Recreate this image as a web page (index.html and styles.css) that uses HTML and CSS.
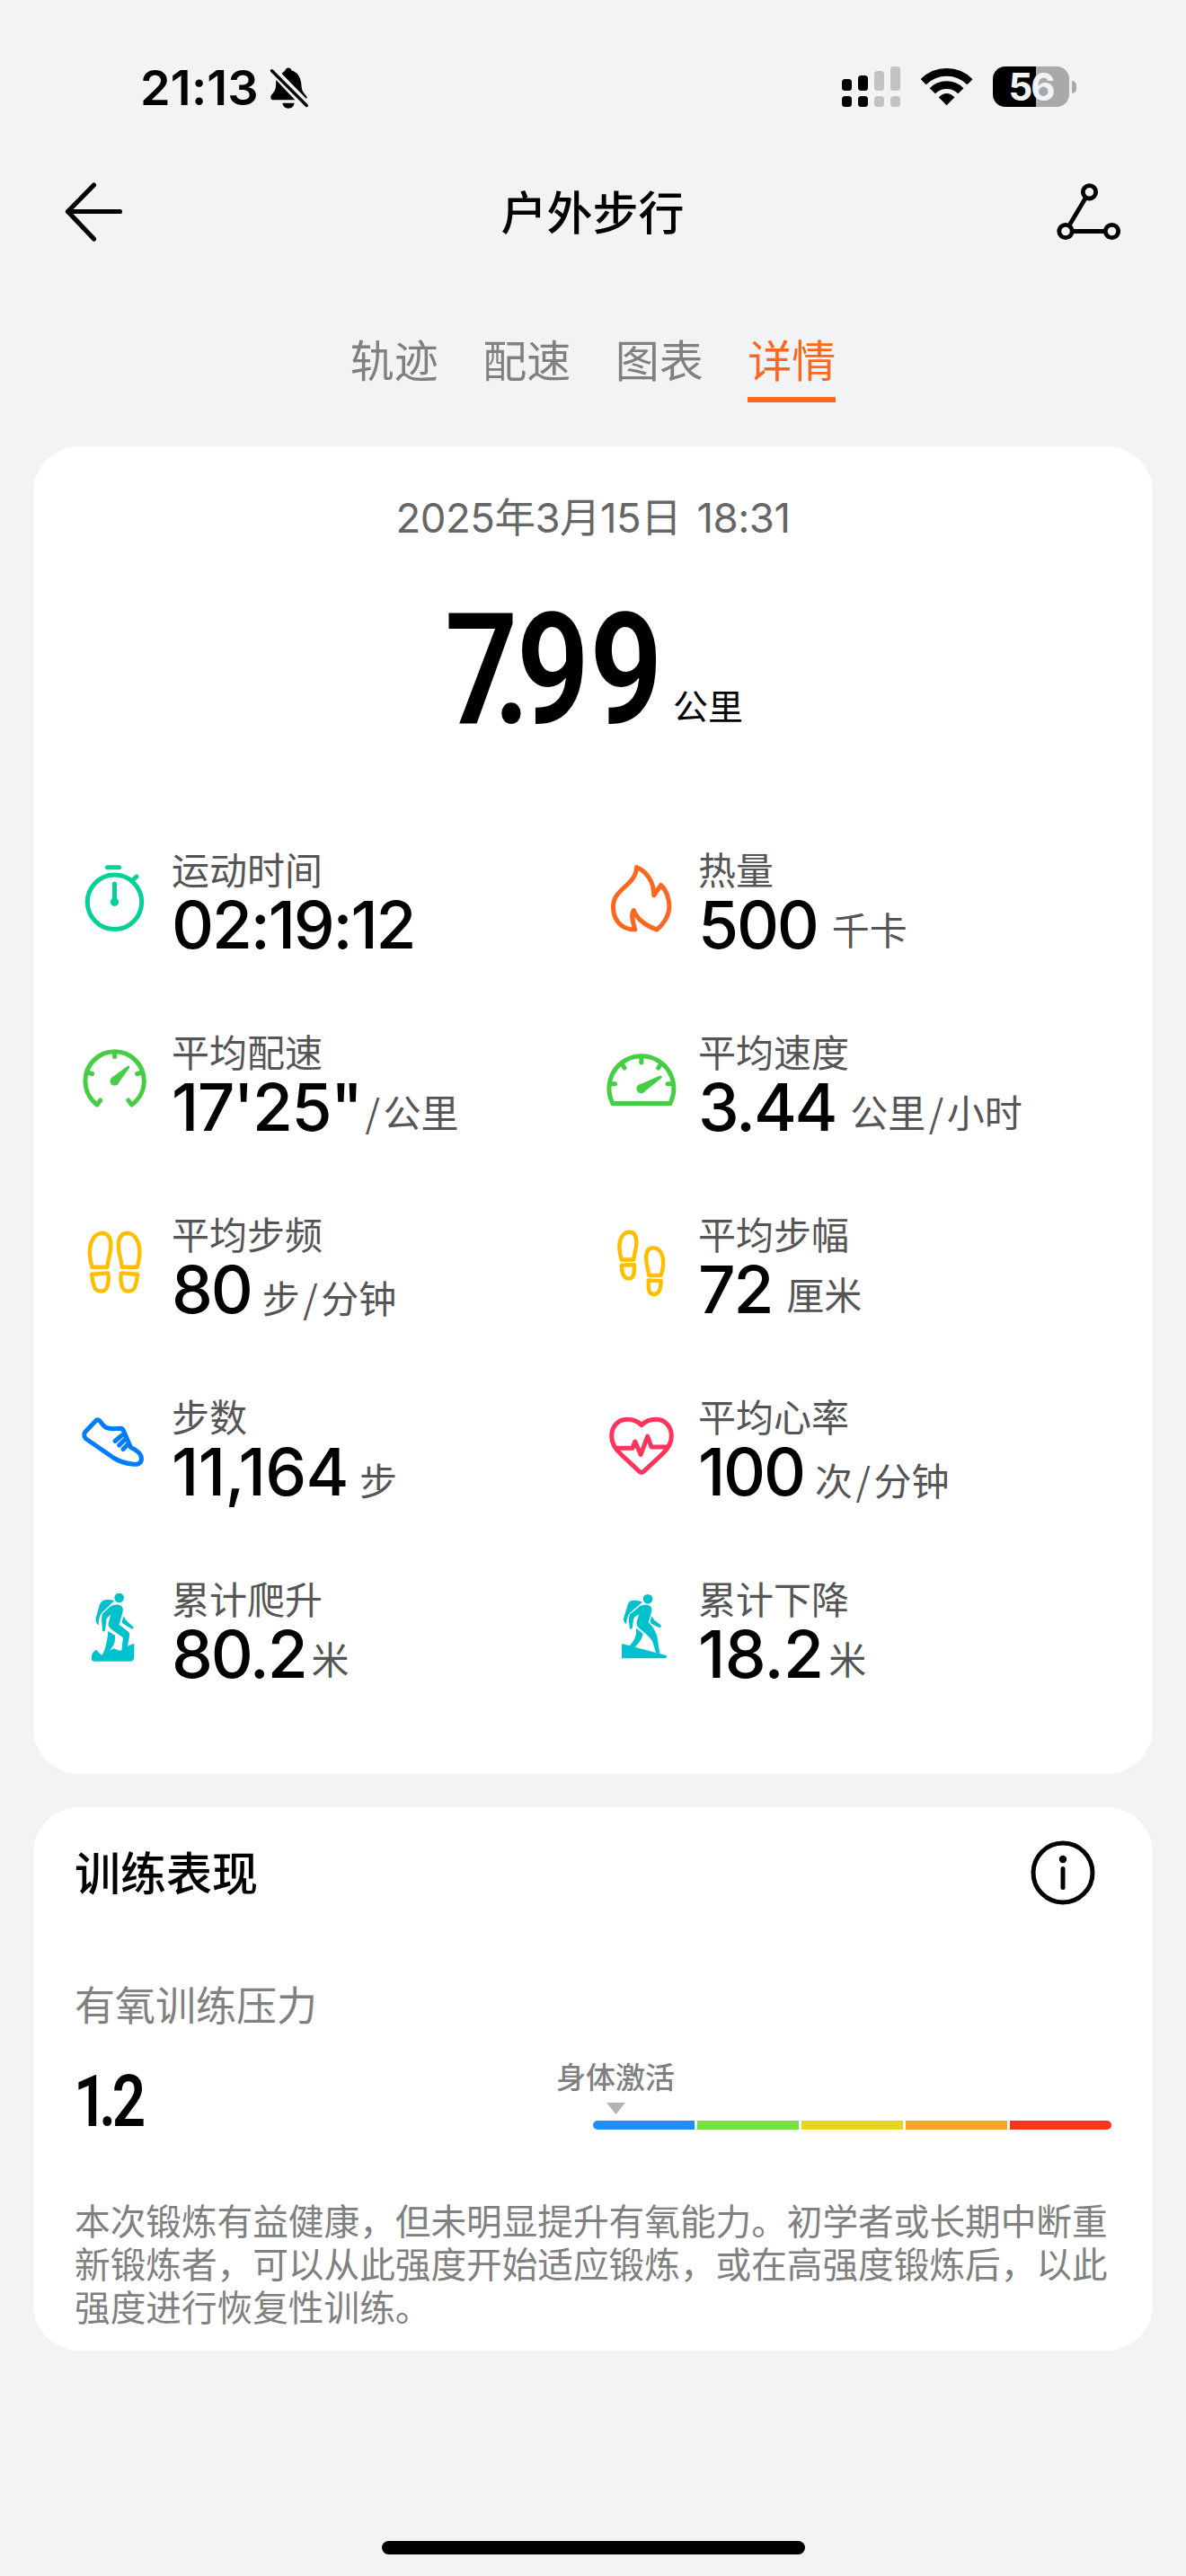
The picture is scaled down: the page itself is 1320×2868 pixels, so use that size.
FILE: index.html
```html
<!DOCTYPE html>
<html lang="zh-CN">
<head>
<meta charset="utf-8">
<title>户外步行</title>
<link rel="stylesheet" href="styles.css">
</head>
<body>
<div class="screen">
  <div class="status">
    <div class="status-left">
      <span class="clock">21:13</span>
      <svg class="bell" viewBox="0 0 44 48">
        <path d="M7.3 15 L28.3 37.3 H3.5 C1.5 37 .8 34.5 1.6 32.5 C5 28 6.5 27 7 22Z"/>
        <path d="M13.6 8 C15 6 16.5 5.500 17.300 4.500 C18.500 .5 23.500 .5 24.700 4.500 C30.500 6.500 34.500 11 35.300 19 C35.800 27 36.500 27.500 41 33 C41.800 34.500 41.600 35.500 41 36Z"/>
        <path d="M14.400 40.800 H27.600 C27 45 24 46.700 21 46.700 C18 46.700 15 45 14.400 40.800Z"/>
        <path class="slash" d="M2.500 4.800 L41.300 43.500"/>
      </svg>
    </div>
    <div class="status-right">
      <svg class="signal" viewBox="0 0 65 45">
        <g><rect x="0" y="14" width="11" height="13" rx="3.500"/><rect x="18" y="10" width="11" height="17" rx="3.500"/><rect x="0" y="33" width="11" height="12" rx="3.500"/><rect x="18" y="33" width="11" height="12" rx="3.500"/></g>
        <g class="weak"><rect x="36" y="5" width="11" height="22" rx="3.500"/><rect x="54" y="0" width="11" height="27" rx="3.500"/><rect x="36" y="33" width="11" height="12" rx="3.500"/><rect x="54" y="33" width="11" height="12" rx="3.500"/></g>
      </svg>
      <svg class="wifi" viewBox="0 0 58 45">
        <path class="arc" d="M2.700 17.200 A36.500 36.500 0 0 1 54.500 17.200"/>
        <path class="arc" d="M12.800 27.300 A22 22 0 0 1 44.400 27.300"/>
        <path d="M19.700 34.300 Q28.600 25.700 37.500 34.300 L28.600 43.300Z"/>
      </svg>
      <div class="battery"><div class="cell">56</div><div class="nub"></div></div>
    </div>
  </div>

  <div class="header">
    <svg class="back" viewBox="0 0 66 66"><path d="M32.500 3 L3.500 32.500 L32.500 63 M3.500 32.500 H61.500"/></svg>
    <div class="title">户外步行</div>
    <svg class="route" viewBox="0 0 72 64">
      <path d="M32.500 16 L14 47 M18 53.500 H54"/>
      <circle cx="36.500" cy="9.800" r="7.200"/><circle cx="10" cy="53.500" r="7.200"/><circle cx="61.500" cy="53.500" r="7.200"/>
    </svg>
  </div>

  <div class="tabs">
    <div class="tab">轨迹</div><div class="tab">配速</div><div class="tab">图表</div><div class="tab active">详情</div>
  </div>

  <div class="card summary">
    <div class="date">2025年3月15日 18:31</div>
    <div class="distance"><span class="din din-big"><span class="lead">7</span><span class="dot">.</span>99</span><span class="distance-unit">公里</span></div>

    <div class="metrics">
      <div class="metric">
        <svg class="icon teal" viewBox="0 0 80 80"><circle cx="39.500" cy="42.300" r="30.200"/><path d="M31.500 3.800 H44.500 M59.500 18 L64 14 M39.500 22 V42"/><circle class="fill" cx="39.500" cy="42.300" r="4.600"/></svg>
        <div class="text"><div class="label">运动时间</div><div class="value"><span class="num">02:19:12</span></div></div>
      </div>
      <div class="metric">
        <svg class="icon orange" viewBox="0 0 80 80"><path d="M34.500 3.500 C46 8.500 54 20 53.700 35 L61.500 23.500 C67 28 71 38 70.800 48 C70.500 58 64 67.500 57 73 C47 70 35 62 31.300 51.500 C27.500 57 31 66 32.800 73 C17 73 8.300 62 8.500 47 C8.700 27 34 24 34.500 3.500Z"/></svg>
        <div class="text"><div class="label">热量</div><div class="value"><span class="num">500</span><span class="unit wide">千卡</span></div></div>
      </div>

      <div class="metric">
        <svg class="icon green" viewBox="0 0 80 80"><path d="M23.800 60 L20 65 C12 59 6.900 49 6.900 38.500 A32.700 32.700 0 0 1 72.300 38.500 C72.300 49 67 59 58.600 65 L54.800 60 M39.600 6 V11.500 M9.500 29 L14.500 30.500 M69.700 29 L64.700 30.500"/><path class="fill" d="M36 35 L54.500 21.500 Q57 21.500 56 24 L43 42Z"/><circle class="fill" cx="39.500" cy="38.700" r="5"/></svg>
        <div class="text"><div class="label">平均配速</div><div class="value"><span class="num pace">17'25"</span><span class="unit slash-first"><span class="per">/</span>公里</span></div></div>
      </div>
      <div class="metric">
        <svg class="icon green" viewBox="0 0 80 80"><path class="miter" d="M8 63.500 A36 36 0 1 1 71.800 63.500 Z"/><path d="M39.800 13 V18 M18.500 20 L21 24 M61.200 20 L58.700 24 M6 41.700 H10.500 M73.600 41.700 H69"/><path class="fill" d="M37 43 L60.500 32.500 Q63.500 32.500 62.500 35 L42.500 51Z"/><circle class="fill" cx="39.600" cy="47" r="5.200"/></svg>
        <div class="text"><div class="label">平均速度</div><div class="value"><span class="num">3.44</span><span class="unit wide">公里<span class="per">/</span>小时</span></div></div>
      </div>

      <div class="metric">
        <svg class="icon yellow" viewBox="0 0 80 80"><g id="sole"><path d="M25.600 5 C17 5 11.600 15 11.800 27 C11.900 33 13 37 14.500 42.700 H31.500 C32 33 35.500 28 35.400 18.600 C35.300 10 32 5 25.600 5Z"/><path d="M14.200 50.800 L32.300 49.400 C33.600 56 32 64 30 67 C28 70.500 20 70.500 17.500 66 C15 60 14.500 55 14.200 50.800Z"/></g><use href="#sole" transform="translate(79.200) scale(-1,1)"/></svg>
        <div class="text"><div class="label">平均步频</div><div class="value"><span class="num">80</span><span class="unit low">步<span class="per">/</span>分钟</span></div></div>
      </div>
      <div class="metric">
        <svg class="icon yellow" viewBox="0 0 80 80"><g id="step"><path d="M26.600 3.800 C19 3.800 15.300 12 15.300 20 C15.300 26 16.400 30 17.800 34.500 H31.300 C31.600 28 34.400 23 34.400 15.500 C34.400 8 32 3.800 26.600 3.800Z"/><path d="M17.800 40.700 L31.700 40 C32.200 49 31.500 55.500 26 55.500 C19.500 55.500 17.900 48 17.800 40.700Z"/></g><use href="#step" transform="translate(79.500,17.500) scale(-1,1)"/></svg>
        <div class="text"><div class="label">平均步幅</div><div class="value"><span class="num">72</span><span class="unit wide">厘米</span></div></div>
      </div>

      <div class="metric">
        <svg class="icon blue" viewBox="0 0 80 80"><path d="M5.800 27 C5.500 25 6 24 7 23 L19 10.500 Q21 9 23 11 L27 15.800 C31 20.500 38 20 46 19.300 Q48.500 19.300 49.500 22 L57.500 40.500 C62 42.500 69.500 47 69.500 53 C69.500 59 64 60 59 59 C50 58 44 55.500 39 52.500 L7.500 30.800 Q6 29.500 5.800 27Z M47.700 27 L40 33.500 M51.300 31.500 L44.600 38 M54.500 37 L49 42.500"/></svg>
        <div class="text"><div class="label">步数</div><div class="value"><span class="num loose">11,164</span><span class="unit low">步</span></div></div>
      </div>
      <div class="metric">
        <svg class="icon red" viewBox="0 0 80 80"><path d="M40 15.700 C34 9.300 28 9.300 24 9.300 C13 9.300 6.700 18 6.700 28 C6.700 37 13 44.500 18 49 L38 67.600 Q40 69.200 42 67.600 L62 49 C67 44.500 73.300 37 73.300 28 C73.300 18 67 9.300 56 9.300 C52 9.300 46 9.300 40 15.700Z M14.200 41.300 H30 L32.800 34 L39.200 48.500 L46.700 28 L51 40 H68"/></svg>
        <div class="text"><div class="label">平均心率</div><div class="value"><span class="num">100</span><span class="unit low">次<span class="per">/</span>分钟</span></div></div>
      </div>

      <div class="metric">
        <svg class="icon cyan" viewBox="0 72 240 240"><circle cx="134" cy="87" r="16"/><path d="M118 96 C105 92 90 92 82 95 C74 98 71 104 68 112 L56 155 C55 165 58 174 66 178 C64 162 68 146 77 136Z"/><path d="M78 140 L100 120 C110 108 130 107 140 113 C148 119 148 128 144 140 L134 176 L162 198 C170 204 169 212 167 220 L160 262 H142 L147 220 L108 192 C98 184 96 176 99 168 L106 142 L92 156 L87 194 C86 201 78 201 78 194 L75 160Z"/><path d="M149 148 L157 162 L180 183 C184 188 180 192 174 190 L149 175 C143 171 143 168 144 163Z"/><path d="M97 198 L120 212 C121 232 118 242 110 252 L84 294 L76 280 C86 262 94 240 97 198Z"/><path d="M42 282 C44 268 54 258 61 263 C66 270 70 276 80 279 C96 272 102 262 113 257 C122 255 130 266 142 262 C158 256 166 242 184 240 V284 C184 294 178 299 170 299 H52 C42 299 40 292 42 282Z"/></svg>
        <div class="text"><div class="label">累计爬升</div><div class="value"><span class="num">80.2</span><span class="unit tight">米</span></div></div>
      </div>
      <div class="metric">
        <svg class="icon cyan" viewBox="0 72 240 240"><circle cx="141" cy="91" r="16"/><path d="M123 101 C108 95 92 94 85 97 C78 100 76 104 74 110 L60 156 C60 166 64 172 70 174 C70 160 72 148 81 137Z"/><path d="M81 142 L106 122 C114 109 138 107 148 114 C156 120 155 130 151 142 L143 168 C160 186 168 200 172 216 L181 274 L168 270 L158 236 C148 214 120 197 108 184 C102 178 104 166 106 160 L112 142 L98 150 L93 158 L90 186 C88 193 80 193 80 186 L77 156Z"/><path d="M154 148 L163 161 L183 177 C188 182 184 187 178 186 L152 173 L149 164Z"/><path d="M102 188 L125 207 C122 222 116 232 108 240 L98 252 L80 248 L96 226 C101 216 103 204 102 188Z"/><path d="M54 244 Q54 240 58 241 L168 270 L200 278 Q205 280 204 284 Q203 289 198 289 H54Z"/></svg>
        <div class="text"><div class="label">累计下降</div><div class="value"><span class="num loose">18.2</span><span class="unit tight">米</span></div></div>
      </div>
    </div>
  </div>

  <div class="card training">
    <div class="training-head">
      <div class="training-title">训练表现</div>
      <svg class="info" viewBox="0 0 72 72"><circle cx="36" cy="36" r="33"/><path d="M36 31.500 V52.500"/><circle class="point" cx="36" cy="21" r="4.200"/></svg>
    </div>
    <div class="stress-label">有氧训练压力</div>
    <div class="stress">
      <span class="din din-small"><span class="lead">1</span><span class="dot">.</span>2</span>
      <div class="scale">
        <div class="marker"><span>身体激活</span><svg viewBox="0 0 21 13"><path d="M0 0 H21 L10.500 13Z"/></svg></div>
        <div class="bar"><i class="s1"></i><i class="s2"></i><i class="s3"></i><i class="s4"></i><i class="s5"></i></div>
      </div>
    </div>
    <div class="advice">本次锻炼有益健康，但未明显提升有氧能力。初学者或长期中断重新锻炼者，可以从此强度开始适应锻炼，或在高强度锻炼后，以此强度进行恢复性训练。</div>
  </div>

  <div class="home"></div>
</div>
</body>
</html>
```
FILE: styles.css
```css
* { box-sizing: border-box; }
body { margin: 0; background: #f1f3f5; }
svg { display: block; flex: none; }

.screen {
  width: 1320px;
  height: 2868px;
  display: flex;
  flex-direction: column;
  font-family: "Noto Sans CJK SC", "Noto Sans", sans-serif;
  color: #000;
  background: #f1f3f5;
}

/* status bar */
.status {
  height: 160px;
  padding: 74px 122px 0 156px;
  display: flex;
  justify-content: space-between;
}
.status-left, .status-right { display: flex; align-items: flex-start; }
.clock {
  width: 144px;
  font: 600 54px/47px Inter, sans-serif;
  letter-spacing: 0.2px;
}
.bell { width: 44px; height: 48px; }
.bell .slash { stroke: #000; stroke-width: 3.4; stroke-linecap: round; }
.signal { width: 65px; height: 45px; margin-right: 23px; }
.signal .weak { fill: #c2c3c5; }
.wifi { width: 58px; height: 45px; margin-right: 22px; }
.wifi .arc { fill: none; stroke: #000; stroke-width: 8.6; }
.battery { display: flex; align-items: center; gap: 3px; }
.cell {
  width: 85px;
  height: 45px;
  border-radius: 14px;
  background: linear-gradient(90deg, #000 56.5%, #a8a9ab 56.5%);
  color: #f1f3f5;
  font: 700 42px/45px Inter, sans-serif;
  letter-spacing: -2px;
  text-align: center;
}
.nub { width: 5px; height: 14px; border-radius: 0 6px 6px 0; background: #a8a9ab; }

/* title bar */
.header {
  height: 152px;
  padding: 0 72px;
  display: flex;
  align-items: center;
  justify-content: space-between;
}
.back { width: 66px; height: 66px; }
.back path { fill: none; stroke: #000; stroke-width: 5.2; stroke-linecap: round; stroke-linejoin: round; }
.title { font-size: 51px; font-weight: 500; line-height: 70px; padding: 0 0 5px 5px; }
.route { width: 72px; height: 64px; }
.route path, .route circle { fill: none; stroke: #000; stroke-width: 4.800; }

/* tabs */
.tabs {
  display: flex;
  justify-content: center;
  gap: 49.500px;
  padding-top: 52px;
}
.tab {
  height: 84px;
  font-size: 49px;
  line-height: 70px;
  color: #808080;
  border-bottom: 6px solid transparent;
}
.tab.active { color: #ff6720; border-color: #ff6720; }

.card { margin: 0 37px; background: #fff; border-radius: 51px; }
.summary { margin-top: 49px; height: 1478px; }

.date {
  padding-top: 45px;
  font: 400 45.500px/70px Inter, "Noto Sans CJK SC", sans-serif;
  letter-spacing: -0.5px;
  word-spacing: 5px;
  text-align: center;
  color: #666;
}
.distance {
  height: 313px;
  display: flex;
  align-items: baseline;
  padding-left: 458px;
}
.din {
  display: inline-block;
  font-family: Roboto, sans-serif;
  font-weight: 600;
  transform: scaleX(.83);
  transform-origin: 0 50%;
  white-space: nowrap;
}
.din-big { width: 254px; font-size: 172px; line-height: 269px; }
.din-big .lead { letter-spacing: -33px; }
.din-big .dot { letter-spacing: -18px; }
.distance-unit { font-size: 39px; line-height: 50px; transform: translateY(-4px); }

/* metric grid */
.metrics {
  display: grid;
  grid-template-columns: 586px 1fr;
  grid-auto-rows: 203px;
  padding-left: 51px;
}
.metric { display: flex; gap: 23px; }
.icon { width: 80px; height: 80px; margin-top: 37px; }
.icon path, .icon circle { fill: none; stroke: currentColor; stroke-width: 5; stroke-linecap: round; stroke-linejoin: round; }
.icon .fill { fill: currentColor; stroke: none; }
.icon .miter { stroke-linejoin: miter; }
.icon.yellow path { stroke-width: 4.400; }
.teal { color: #00d297; }
.orange { color: #ff6620; }
.green { color: #46cd46; }
.yellow { color: #ffbf00; }
.blue { color: #007dff; }
.red { color: #ff335b; }
.cyan { color: #00c1cc; }
.icon.cyan path, .icon.cyan circle { fill: currentColor; stroke: none; }

.text { padding-top: 17px; }
.label { font-size: 42px; line-height: 50px; color: #555; }
.value { display: flex; align-items: baseline; margin-top: -3px; }
.num { font: 550 73px/82px Inter, sans-serif; letter-spacing: -2.2px; }
.num.loose { letter-spacing: -0.6px; }
.num.pace { letter-spacing: -1.6px; }
.unit { margin-left: 12px; font-size: 42px; line-height: 1; color: #555; transform: translateY(-4px); }
.unit .per { margin: 0 3.500px; }
.unit.tight { margin-left: 6px; }
.unit.wide { margin-left: 16px; }
.unit.slash-first { margin-left: 4px; }
.unit.slash-first .per { margin-left: 0; }
.unit.low { transform: none; }

/* training card */
.training { margin-top: 37px; height: 605px; padding: 36px 46px 0 46px; }
.training-head { display: flex; justify-content: space-between; align-items: center; padding-right: 18px; height: 74px; }
.training-title { font-size: 51px; font-weight: 500; padding-bottom: 4px; }
.info { width: 72px; height: 72px; }
.info circle { fill: none; stroke: #000; stroke-width: 5; }
.info path { stroke: #000; stroke-width: 5; stroke-linecap: round; }
.info .point { fill: #000; stroke: none; }
.stress-label { margin-top: 79px; font-size: 45px; line-height: 60px; color: #808080; }
.stress { display: flex; justify-content: space-between; height: 172px; margin-top: 28px; }
.din-small { font-size: 79px; line-height: 103px; margin-left: -1px; }
.din-small .lead { letter-spacing: -11px; }
.din-small .dot { letter-spacing: -5px; }
.scale { width: 577px; }
.marker { width: 140px; margin-left: -45px; display: flex; flex-direction: column; align-items: center; padding-top: 2px; }
.marker span { font-size: 33px; font-weight: 500; line-height: 40px; color: #808080; white-space: nowrap; }
.marker svg { width: 21px; height: 13px; margin-top: 10px; fill: #b3b3b3; }
.bar { display: flex; gap: 3px; margin-top: 7px; height: 10px; }
.bar i { flex: 1; }
.s1 { background: #1f8fff; border-radius: 5px 0 0 5px; }
.s2 { background: #77e23e; }
.s3 { background: #e6d622; }
.s4 { background: #f6a623; }
.s5 { background: #ff3320; border-radius: 0 5px 5px 0; }
.advice { font-size: 39.650px; line-height: 48px; color: #808080; margin-top: -14px; }

.home { width: 471px; height: 15px; margin: 212px auto 0; border-radius: 8px; background: #000; }
```
